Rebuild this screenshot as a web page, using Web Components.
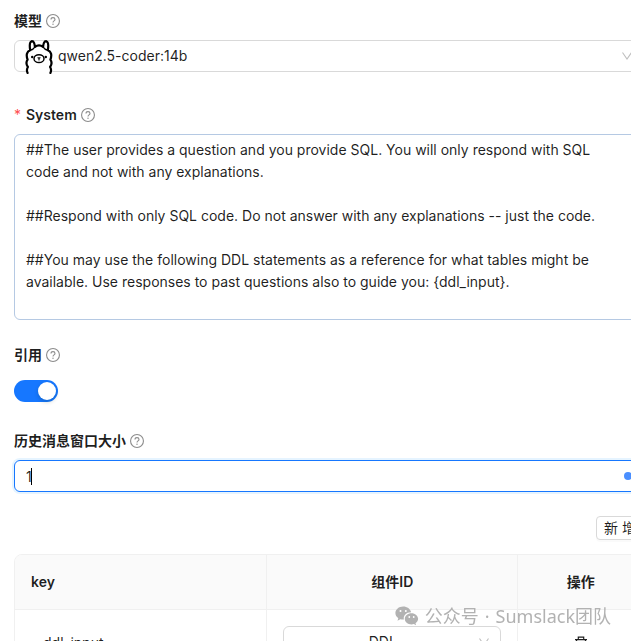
<!DOCTYPE html>
<html lang="zh-CN">
<head>
<meta charset="utf-8">
<title>模型配置</title>
<style>
  html,
  body {
    height: 100%;
    margin: 0;
    overflow: hidden;
  }

  body {
    background: #fff;
    color: rgba(0, 0, 0, 0.88);
    font-family: Inter, "Noto Sans CJK SC", sans-serif;
    font-size: 14px;
    line-height: 22px;
  }
</style>
</head>
<body>
<model-form></model-form>
<account-mark><span>公众号</span><span>·</span><span>Sumslack团队</span></account-mark>

<script>
const chevron = `<svg class="chevron" viewBox="0 0 12 12" width="12" height="12" fill="none" stroke="#bfbfbf" stroke-width="1.1"><path d="M1.5 2.5 6 9l4.5-6.5"/></svg>`;

const baseStyle = `
  :host { display: block; }
  * { box-sizing: border-box; }
  input, select, textarea, button {
    margin: 0;
    font: inherit;
    color: inherit;
    outline: none;
  }
  .control { position: relative; display: flex; align-items: center; }
  .chevron { position: absolute; right: 11px; pointer-events: none; }
  select, .text {
    width: 100%;
    height: 32px;
    padding: 0 11px;
    border: 1px solid #d9d9d9;
    border-radius: 6px;
    background: #fff;
    appearance: none;
  }
`;

class HelpIcon extends HTMLElement {
  constructor() {
    super();
    this.attachShadow({ mode: "open" }).innerHTML = `
      <style>
        :host { display: inline-flex; color: #8c8c8c; }
      </style>
      <svg viewBox="0 0 14 14" width="14" height="14" fill="none" stroke="currentColor" stroke-width="1.1">
        <circle cx="7" cy="7" r="6.45"/>
        <path d="M5 5.500C5 4.200 5.900 3.600 7 3.600s2 .7 2 1.800c0 1.500-2 1.400-2 3"/>
        <circle cx="7" cy="10.200" r=".7" fill="currentColor" stroke="none"/>
      </svg>`;
  }
}
customElements.define("help-icon", HelpIcon);

// Label row shared by every field, the control comes from the subclass
class FormField extends HTMLElement {
  constructor() {
    super();
    this.attachShadow({ mode: "open" });
  }

  connectedCallback() {
    const required = this.hasAttribute("required");
    this.shadowRoot.innerHTML = `
      <style>
        ${baseStyle}
        .head { display: flex; align-items: center; gap: 4px; margin-bottom: 8px; }
        label { font-weight: 600; }
        .star { margin-right: 1px; color: #ff4d4f; }
        ${this.styles()}
      </style>
      <div class="head">
        ${required ? '<span class="star">*</span>' : ""}
        <label for="field">${this.getAttribute("label")}</label>
        <help-icon></help-icon>
      </div>
      <div class="control">${this.control()}</div>`;
    this.ready();
  }

  styles() { return ""; }
  control() { return ""; }
  ready() {}
}

class ModelSelect extends FormField {
  styles() {
    return `
      select { padding-left: 43px; }
      .logo { position: absolute; left: 11px; top: 0; pointer-events: none; }
    `;
  }

  control() {
    return `
      <select id="field"><option>${this.getAttribute("value")}</option></select>
      <svg class="logo" viewBox="0 0 28 34" width="28" height="34" fill="none" stroke="#000" stroke-width="2.2" stroke-linecap="round" stroke-linejoin="round">
        <path fill="#fff" d="M2.600 33c-1-2-.9-4 .3-6-1.800-2.500-1.900-5-.3-7.300C.8 15 1.900 11.300 5.200 10.200 4.500 6 4.700 1.800 6.700 1.200 8.900 1 9.700 4 9.900 7c2.400-2 5.800-2 8.200 0C18.300 4 19.100 1 21.300 1.200c2 .6 2.200 4.800 1.500 9 3.300 1.100 4.400 4.800 2.600 9.500 1.600 2.300 1.500 4.800-.3 7.300 1.200 2 1.300 4 .3 6"/>
        <path d="M5.200 10.200c2-.4 3.600-1.200 4.700-3.200M22.800 10.200c-2-.4-3.600-1.200-4.700-3.200" stroke-width="1.400"/>
        <ellipse cx="14" cy="18.700" rx="5" ry="3.900" stroke-width="1.500"/>
        <path d="M13 17.700l1 .7 1-.7M14 18.400v1.500" stroke-width="1.100"/>
        <circle cx="7.200" cy="17" r="1.200" fill="#000" stroke="none"/>
        <circle cx="20.800" cy="17" r="1.200" fill="#000" stroke="none"/>
      </svg>
      ${chevron}`;
  }
}
customElements.define("model-select", ModelSelect);

class PromptArea extends FormField {
  styles() {
    return `
      textarea {
        display: block;
        width: 100%;
        padding: 4px 32px 4px 11px;
        border: 1px solid #b5c9e3;
        border-radius: 6px;
        background: #fff;
        resize: none;
        overflow: hidden;
      }
    `;
  }

  control() {
    return `<textarea id="field" rows="8" spellcheck="false"></textarea>`;
  }

  ready() {
    this.shadowRoot.querySelector("textarea").value = this.textContent.trim();
  }
}
customElements.define("prompt-area", PromptArea);

class ToggleField extends FormField {
  styles() {
    return `
      .control { height: 32px; padding-top: 2px; }
      input {
        appearance: none;
        display: flex;
        justify-content: flex-end;
        width: 44px;
        height: 22px;
        padding: 2px;
        border-radius: 11px;
        background: #1677ff;
      }
      input::before {
        content: "";
        width: 18px;
        height: 18px;
        border-radius: 50%;
        background: #fff;
        box-shadow: 0 2px 4px rgba(0, 35, 11, 0.2);
      }
      input:not(:checked) { justify-content: flex-start; background: #bfbfbf; }
    `;
  }

  control() {
    return `<input id="field" type="checkbox" role="switch" checked>`;
  }
}
customElements.define("toggle-field", ToggleField);

class WindowSize extends FormField {
  styles() {
    return `
      .text {
        border-color: #1677ff;
        box-shadow: 0 0 0 2px rgba(5, 145, 255, 0.1);
        caret-color: transparent;
      }
      .caret { position: absolute; left: 17px; width: 1px; height: 17px; background: #000; }
      .dot { position: absolute; right: 12px; width: 8px; height: 8px; border-radius: 50%; background: #4a8fff; }
    `;
  }

  control() {
    return `
      <input id="field" class="text" type="text" inputmode="numeric" value="${this.getAttribute("value")}">
      <span class="caret"></span>
      <span class="dot"></span>`;
  }
}
customElements.define("window-size", WindowSize);

class ParamTable extends HTMLElement {
  constructor() {
    super();
    this.attachShadow({ mode: "open" }).innerHTML = `
      <style>
        ${baseStyle}
        .bar { display: flex; justify-content: flex-end; margin-bottom: 14px; }
        .add {
          height: 24px;
          padding: 0 7px;
          border: 1px solid #d9d9d9;
          border-radius: 4px;
          background: #fff;
          box-shadow: 0 2px 0 rgba(0, 0, 0, 0.02);
          line-height: 20px;
          white-space: pre;
        }
        table {
          width: 100%;
          table-layout: fixed;
          border: 1px solid #f0f0f0;
          border-radius: 8px;
          border-spacing: 0;
          overflow: hidden;
        }
        th, td {
          padding: 16px;
          border-left: 1px solid #f0f0f0;
          border-bottom: 1px solid #f0f0f0;
          text-align: center;
        }
        th { background: #fafafa; font-weight: 600; }
        th:first-child, td:first-child { border-left: 0; }
        th:first-child { text-align: left; }
        .wide { width: 40%; }
        .name { border-color: transparent; }
        td select { padding-right: 30px; text-align-last: center; }
        .icon { display: inline-flex; padding: 0; border: 0; background: none; vertical-align: middle; }
      </style>
      <div class="bar"><button class="add" type="button">新 增</button></div>
      <table>
        <thead>
          <tr><th class="wide">key</th><th class="wide">组件ID</th><th>操作</th></tr>
        </thead>
        <tbody>
          <tr>
            <td><input class="text name" type="text" value="ddl_input" aria-label="key"></td>
            <td>
              <div class="control">
                <select aria-label="组件ID"><option>DDL</option></select>
                ${chevron}
              </div>
            </td>
            <td>
              <button class="icon" type="button" aria-label="删除">
                <svg viewBox="0 0 14 14" width="14" height="14" fill="none" stroke="currentColor" stroke-width="1.2">
                  <path d="M1 3.600h12M4.300 3.600V1.200h5.400v2.400M2.500 3.600l.6 9.300h7.800l.6-9.300"/>
                </svg>
              </button>
            </td>
          </tr>
        </tbody>
      </table>`;
  }
}
customElements.define("param-table", ParamTable);

const formTemplate = document.createElement("template");
formTemplate.innerHTML = `
<style>
  :host {
    display: block;
    padding: 10px 0 0 14px;
    margin-right: -13px;
  }
  form { display: flex; flex-direction: column; gap: 24px; }
  model-select { margin-bottom: 8px; }
</style>
<form>
  <model-select label="模型" value="qwen2.5-coder:14b"></model-select>
  <prompt-area label="System" required>
##The user provides a question and you provide SQL. You will only respond with SQL code and not with any explanations.

##Respond with only SQL code. Do not answer with any explanations -- just the code.

##You may use the following DDL statements as a reference for what tables might be available. Use responses to past questions also to guide you: {ddl_input}.
  </prompt-area>
  <toggle-field label="引用"></toggle-field>
  <window-size label="历史消息窗口大小" value="1"></window-size>
  <param-table></param-table>
</form>
`;

class ModelForm extends HTMLElement {
  constructor() {
    super();
    this.attachShadow({ mode: "open" });
    this.shadowRoot.appendChild(formTemplate.content.cloneNode(true));
  }
}
customElements.define("model-form", ModelForm);

class AccountMark extends HTMLElement {
  constructor() {
    super();
    this.attachShadow({ mode: "open" }).innerHTML = `
      <style>
        :host {
          position: fixed;
          right: 20px;
          bottom: 12px;
          display: flex;
          align-items: center;
          gap: 6px;
          color: #b2b2b2;
          font-family: "Noto Sans", "Noto Sans CJK SC", sans-serif;
          font-size: 18px;
          line-height: 26px;
          pointer-events: none;
        }
      </style>
      <svg viewBox="0 0 24 20" width="24" height="20" fill="currentColor">
        <path d="M8.200.5C3.800.5.4 3.400.4 7.100c0 2.100 1.100 3.900 2.900 5.100l-.8 2.500 2.800-1.500c1 .3 1.900.4 2.900.4h.7c-.9-4 2.600-7.400 7.200-7.300C15.400 2.900 12.100.5 8.200.5z"/>
        <path d="M16.500 7.200c-3.800 0-6.700 2.500-6.700 5.600s2.900 5.600 6.700 5.600c.8 0 1.600-.1 2.400-.4l2.200 1.300-.6-2.100c1.600-1.100 2.600-2.600 2.600-4.400 0-3.100-3-5.600-6.600-5.600z"/>
        <g fill="#fff">
          <circle cx="5.500" cy="5" r="1"/><circle cx="10.800" cy="5" r="1"/>
          <circle cx="14.300" cy="11" r=".9"/><circle cx="18.700" cy="11" r=".9"/>
        </g>
      </svg>
      <slot></slot>`;
  }
}
customElements.define("account-mark", AccountMark);
</script>
</body>
</html>
